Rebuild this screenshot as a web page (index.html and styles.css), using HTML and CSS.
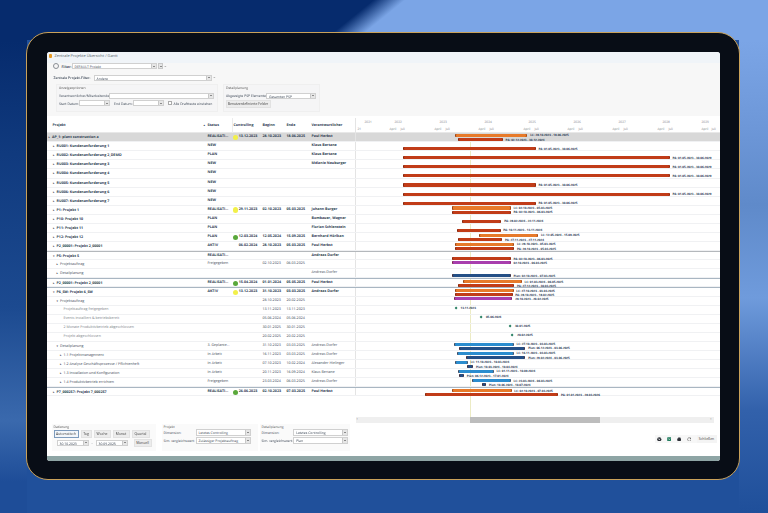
FILE: index.html
```html
<!DOCTYPE html>
<html lang="de">
<head>
<meta charset="utf-8">
<title>Zentrale Projekte Übersicht / Gantt</title>
<link rel="stylesheet" href="styles.css">
</head>
<body>
<div class="frame">
<div class="window">
  <div class="titlebar"><span class="appicon"></span><span>Zentrale Projekte Übersicht / Gantt</span></div>
  <div class="top">
    <div class="line line-filter">
      <span class="circle"></span><strong class="lbl-filter">Filter:</strong>
      <div class="field f-filter"><span class="val">DEFAULT Projekt</span><span class="drop"></span></div><span class="drop loose"></span><span class="dots">•••</span>
    </div>
    <div class="line line-central">
      <span class="lbl-central">Zentrale Projekt-Filter:</span>
      <div class="field f-central"><span class="val">Andere</span><span class="drop"></span></div><span class="dots">•••</span>
    </div>
    <div class="groups">
      <section class="group g-view">
        <h4>Anzeigeoptionen</h4>
        <div class="line"><span class="lbl-owner">Verantwortlicher/Mitarbeitender:</span><div class="field f-owner"><span class="val"></span><span class="drop"></span></div></div>
        <div class="line line-dates">
          <span class="lbl-date">Start Datum:</span><div class="field f-date"><span class="val"></span><span class="drop"></span></div>
          <span class="lbl-date2">End Datum:</span><div class="field f-date"><span class="val"></span><span class="drop"></span></div>
          <span class="check"></span><span>Alle Drafttexte einziehen</span>
        </div>
      </section>
      <section class="group g-plan">
        <h4>Detailplanung</h4>
        <div class="line"><span class="lbl-psp">Abgezeigte PSP Elemente:</span><div class="field f-psp"><span class="val">Gesamten PSP</span><span class="drop"></span></div></div>
        <button class="btn btn-fields">Benutzerdefinierte Felder</button>
      </section>
    </div>
  </div>

  <div class="table">
    <div class="row head">
      <div class="c hname"><span>Projekt</span><span class="sort">▴</span></div>
      <div class="c">Status</div>
      <div class="c hctl">Controlling</div>
      <div class="c">Beginn</div>
      <div class="c">Ende</div>
      <div class="c">Verantwortlicher</div>
      <div class="timeline">
        <span class="yr" style="left:9px">2021</span><span class="yr" style="left:39px">2022</span><span class="yr" style="left:84px">2023</span><span class="yr" style="left:129px">2024</span><span class="yr" style="left:173px">2025</span><span class="yr" style="left:218px">2026</span><span class="yr" style="left:263px">2027</span><span class="yr" style="left:307px">2028</span><span class="yr" style="left:346px">2029</span>
        <span class="mo" style="left:2px">21</span>
        <span class="mo" style="left:34px">April</span><span class="mo" style="left:45px">Juli</span><span class="mo" style="left:79px">April</span><span class="mo" style="left:90px">Juli</span><span class="mo" style="left:123px">April</span><span class="mo" style="left:134px">Juli</span><span class="mo" style="left:168px">April</span><span class="mo" style="left:179px">Juli</span><span class="mo" style="left:212px">April</span><span class="mo" style="left:223px">Juli</span><span class="mo" style="left:257px">April</span><span class="mo" style="left:268px">Juli</span><span class="mo" style="left:302px">April</span><span class="mo" style="left:313px">Juli</span><span class="mo" style="left:346px">April</span><span class="mo" style="left:356px">Juli</span>
      </div>
    </div>
    <div class="rows">
      <span class="today"></span>

      <div class="row bold hl"><div class="c l0"><i>▸</i>AP_1: plant construction a</div><div class="c">REALISATI...</div><div class="c ctl"><span class="dot y"></span>13.12.2023</div><div class="c">28.10.2023</div><div class="c">18.06.2025</div><div class="c">Paul Herbst</div>
        <div class="gantt"><span class="bar org up" style="left:99.3px;width:72.7px"><b>LC: 28.10.2023 - 18.06.2025</b></span><span class="bar red lo" style="left:102.7px;width:44.7px"><b>PA: 02.12.2023 - 30.12.2024</b></span></div></div>

      <div class="row bold"><div class="c l1"><i>▸</i>RU001: Kundenanforderung 1</div><div class="c">NEW</div><div class="c"></div><div class="c"></div><div class="c"></div><div class="c">Klaus Bertane</div>
        <div class="gantt"><span class="bar red lo" style="left:47px;width:133.3px"><b>PA: 01.05.2023 - 30.06.2025</b></span></div></div>
      <div class="row bold"><div class="c l1"><i>▸</i>RU002: Kundenanforderung 2_DEMO</div><div class="c">PLAN</div><div class="c"></div><div class="c"></div><div class="c"></div><div class="c">Klaus Bertane</div>
        <div class="gantt"><span class="bar red lo" style="left:47px;width:267.3px"><b>PA: 01.05.2023 - 30.06.2029</b></span></div></div>
      <div class="row bold"><div class="c l1"><i>▸</i>RU003: Kundenanforderung 3</div><div class="c">NEW</div><div class="c"></div><div class="c"></div><div class="c"></div><div class="c">Mélanie Neuburger</div>
        <div class="gantt"><span class="bar red lo" style="left:47px;width:267.3px"><b>PA: 01.05.2023 - 30.06.2029</b></span></div></div>
      <div class="row bold"><div class="c l1"><i>▸</i>RU004: Kundenanforderung 4</div><div class="c">NEW</div><div class="c"></div><div class="c"></div><div class="c"></div><div class="c"></div>
        <div class="gantt"><span class="bar red lo" style="left:47px;width:267.3px"><b>PA: 01.05.2023 - 30.06.2029</b></span></div></div>
      <div class="row bold"><div class="c l1"><i>▸</i>RU005: Kundenanforderung 5</div><div class="c">NEW</div><div class="c"></div><div class="c"></div><div class="c"></div><div class="c"></div>
        <div class="gantt"><span class="bar red lo" style="left:47px;width:133.3px"><b>PA: 01.05.2023 - 30.06.2025</b></span></div></div>
      <div class="row bold"><div class="c l1"><i>▸</i>RU006: Kundenanforderung 6</div><div class="c">NEW</div><div class="c"></div><div class="c"></div><div class="c"></div><div class="c"></div>
        <div class="gantt"><span class="bar red lo" style="left:47px;width:267.3px"><b>PA: 01.05.2023 - 30.06.2029</b></span></div></div>
      <div class="row bold"><div class="c l1"><i>▸</i>RU007: Kundenanforderung 7</div><div class="c">NEW</div><div class="c"></div><div class="c"></div><div class="c"></div><div class="c"></div>
        <div class="gantt"><span class="bar red lo" style="left:47px;width:133.3px"><b>PA: 01.05.2023 - 30.06.2025</b></span></div></div>

      <div class="row bold"><div class="c l1"><i>▸</i>P1: Projekt 1</div><div class="c">REALISATI...</div><div class="c ctl"><span class="dot y"></span>29.11.2023</div><div class="c">02.10.2023</div><div class="c">05.03.2025</div><div class="c">Johann Burger</div>
        <div class="gantt"><span class="bar org up" style="left:96px;width:59.3px"><b>LC: 02.10.2023 - 05.03.2025</b></span><span class="bar red lo" style="left:96px;width:59.3px"><b>PA: 02.10.2023 - 06.03.2025</b></span></div></div>
      <div class="row bold"><div class="c l1"><i>▸</i>P10: Projekt 10</div><div class="c">PLAN</div><div class="c"></div><div class="c"></div><div class="c"></div><div class="c">Bombauer, Wagner</div>
        <div class="gantt"><span class="bar red lo" style="left:106.7px;width:39.3px"><b>PA: 28.02.2024 - 22.11.2024</b></span></div></div>
      <div class="row bold"><div class="c l1"><i>▸</i>P11: Projekt 11</div><div class="c">PLAN</div><div class="c"></div><div class="c"></div><div class="c"></div><div class="c">Florian Schlenstein</div>
        <div class="gantt"><span class="bar red lo" style="left:101px;width:44px"><b>PA: 10.11.2023 - 13.11.2024</b></span></div></div>
      <div class="row bold"><div class="c l1"><i>▸</i>P12: Projekt 12</div><div class="c">PLAN</div><div class="c ctl"><span class="dot g"></span>12.03.2024</div><div class="c">12.05.2024</div><div class="c">15.09.2025</div><div class="c">Bernhard Hörlkan</div>
        <div class="gantt"><span class="bar org up" style="left:123px;width:59.7px"><b>LC: 12.05.2024 - 15.09.2025</b></span><span class="bar red lo" style="left:102px;width:44.7px"><b>PA: 27.11.2023 - 27.11.2024</b></span></div></div>
      <div class="row bold"><div class="c l1"><i>▸</i>P2_00001: Projekt 2_00001</div><div class="c">AKTIV</div><div class="c ctl">06.02.2024</div><div class="c">28.10.2023</div><div class="c">05.03.2025</div><div class="c">Paul Herbst</div>
        <div class="gantt"><span class="bar org up" style="left:99px;width:59.7px"><b>LC: 28.10.2023 - 05.03.2025</b></span><span class="bar red lo" style="left:99px;width:59.7px"><b>PA: 28.10.2023 - 05.03.2025</b></span></div></div>

      <div class="row sep thick"><div class="c l1 b"><i>▾</i>P5: Projekt 5</div><div class="c b">REALISATI...</div><div class="c"></div><div class="c"></div><div class="c"></div><div class="c b">Andreas Dorfer</div>
        <div class="gantt"><span class="bar red lo" style="left:96px;width:59.3px"><b>PA: 02.10.2023 - 06.03.2025</b></span></div></div>
      <div class="row"><div class="c l2"><i>▸</i>Projektauftrag</div><div class="c">Freigegeben</div><div class="c"></div><div class="c">02.10.2023</div><div class="c">06.03.2025</div><div class="c"></div>
        <div class="gantt"><span class="bar pur up" style="left:96px;width:59.3px"><b>02.10.2023 - 06.03.2025</b></span></div></div>
      <div class="row"><div class="c l2"><i>▸</i>Detailplanung</div><div class="c"></div><div class="c"></div><div class="c"></div><div class="c"></div><div class="c">Andreas Dorfer</div>
        <div class="gantt"><span class="bar nav lo" style="left:96px;width:59.3px"><b>Plan: 02.10.2023 - 07.03.2025</b></span></div></div>

      <div class="row bold sep"><div class="c l1"><i>▸</i>P2_00001: Projekt 2_00001</div><div class="c">REALISATI...</div><div class="c ctl"><span class="dot g"></span>15.04.2024</div><div class="c">01.01.2024</div><div class="c">05.05.2025</div><div class="c">Paul Herbst</div>
        <div class="gantt"><span class="bar org up" style="left:107px;width:59.3px"><b>LC: 01.03.2024 - 06.05.2025</b></span><span class="bar red lo" style="left:102.7px;width:56px"><b>PA: 27.12.2023 - 30.03.2025</b></span></div></div>

      <div class="row bold sep"><div class="c l1"><i>▾</i>P6_SW: Projekt 6_SW</div><div class="c">AKTIV</div><div class="c ctl"><span class="dot y"></span>13.12.2023</div><div class="c">31.10.2023</div><div class="c">03.03.2025</div><div class="c">Andreas Dorfer</div>
        <div class="gantt"><span class="bar org up" style="left:99px;width:59px"><b>LC: 27.10.2023 - 03.03.2025</b></span><span class="bar red lo" style="left:99px;width:58px"><b>PA: 28.10.2023 - 18.02.2025</b></span></div></div>
      <div class="row"><div class="c l2"><i>▾</i>Projektauftrag</div><div class="c"></div><div class="c"></div><div class="c">28.10.2023</div><div class="c">20.02.2025</div><div class="c"></div>
        <div class="gantt"><span class="bar pur up" style="left:98.7px;width:58.3px"><b>28.10.2023 - 20.02.2025</b></span></div></div>
      <div class="row"><div class="c l3">Projektauftrag freigegeben</div><div class="c"></div><div class="c"></div><div class="c">13.11.2023</div><div class="c">13.11.2023</div><div class="c"></div>
        <div class="gantt"><span class="ms" style="left:100.3px"><b>13.11.2023</b></span></div></div>
      <div class="row"><div class="c l3">Events installiert &amp; betriebsbereit</div><div class="c"></div><div class="c"></div><div class="c">05.06.2024</div><div class="c">05.06.2024</div><div class="c"></div>
        <div class="gantt"><span class="ms" style="left:125.7px"><b>05.06.2024</b></span></div></div>
      <div class="row"><div class="c l3">2 Monate Produktivbetrieb abgeschlossen</div><div class="c"></div><div class="c"></div><div class="c">30.01.2025</div><div class="c">30.01.2025</div><div class="c"></div>
        <div class="gantt"><span class="ms" style="left:154.7px"><b>30.01.2025</b></span></div></div>
      <div class="row"><div class="c l3">Projekt abgeschlossen</div><div class="c"></div><div class="c"></div><div class="c">20.02.2025</div><div class="c">20.02.2025</div><div class="c"></div>
        <div class="gantt"><span class="ms" style="left:157px"><b>20.02.2025</b></span></div></div>
      <div class="row"><div class="c l2"><i>▾</i>Detailplanung</div><div class="c">3. Geplante...</div><div class="c"></div><div class="c">31.10.2023</div><div class="c">03.03.2025</div><div class="c">Andreas Dorfer</div>
        <div class="gantt"><span class="bar sky up" style="left:98.7px;width:59.7px"><b>LC: 27.10.2023 - 03.03.2025</b></span><span class="bar nav lo" style="left:103.3px;width:66.7px"><b>Plan: 06.12.2023 - 03.06.2025</b></span></div></div>
      <div class="row"><div class="c l3a"><i>▸</i>1.1 Projektmanagement</div><div class="c">In Arbeit</div><div class="c"></div><div class="c">16.11.2023</div><div class="c">03.03.2025</div><div class="c">Andreas Dorfer</div>
        <div class="gantt"><span class="bar sky up" style="left:101.7px;width:56.7px"><b>LC: 16.11.2023 - 03.03.2025</b></span><span class="bar nav lo" style="left:110.3px;width:59.7px"><b>Plan: 29.02.2024 - 03.06.2025</b></span></div></div>
      <div class="row"><div class="c l3a"><i>▸</i>1.2 Analyse Geschäftsprozesse / Pflichtenheft</div><div class="c">In Arbeit</div><div class="c"></div><div class="c">07.10.2023</div><div class="c">10.02.2024</div><div class="c">Alexander Hielinger</div>
        <div class="gantt"><span class="bar sky up" style="left:99px;width:13.3px"><b>LC: 11.10.2023 - 10.03.2024</b></span><span class="bar nav lo" style="left:111.7px;width:6px"><b>Plan: 10.03.2024 - 10.04.2024</b></span></div></div>
      <div class="row"><div class="c l3a"><i>▸</i>1.3 Installation und Konfiguration</div><div class="c">In Arbeit</div><div class="c"></div><div class="c">20.11.2023</div><div class="c">16.09.2024</div><div class="c">Klaus Bertane</div>
        <div class="gantt"><span class="bar sky up" style="left:102px;width:36.3px"><b>LC: 01.11.2023 - 10.09.2024</b></span><span class="bar nav lo" style="left:103.3px;width:5.3px"><b>Plan: 06.12.2023 - 17.01.2024</b></span></div></div>
      <div class="row"><div class="c l3a"><i>▸</i>1.4 Produktivbetrieb errichten</div><div class="c">Freigegeben</div><div class="c"></div><div class="c">23.03.2024</div><div class="c">06.03.2025</div><div class="c">Andreas Dorfer</div>
        <div class="gantt"><span class="bar sky up" style="left:116.7px;width:38.7px"><b>LC: 23.03.2024 - 06.03.2025</b></span><span class="bar nav lo" style="left:126px;width:4.7px"><b>Plan: 10.06.2024 - 10.07.2024</b></span></div></div>

      <div class="row bold sep"><div class="c l1"><i>▸</i>P7_000257: Projekt 7_000257</div><div class="c">REALISATI...</div><div class="c ctl"><span class="dot g"></span>26.06.2023</div><div class="c">02.10.2023</div><div class="c">07.03.2025</div><div class="c">Paul Herbst</div>
        <div class="gantt"><span class="bar org up" style="left:96px;width:60px"><b>LC: 02.10.2023 - 07.03.2025</b></span><span class="bar red lo" style="left:69px;width:133.7px"><b>PA: 01.01.2023 - 28.03.2026</b></span></div></div>
    </div>
    <div class="scroll"><span class="arrow">‹</span><span class="thumb"></span><span class="arrow end">›</span></div>
  </div>

  <div class="bottom">
    <section class="pane p-date">
      <h4>Datierung</h4>
      <div class="btns"><button class="btn sel b-auto">Automatisch</button><button class="btn b-day">Tag</button><button class="btn b-wk">Woche</button><button class="btn b-wk">Monat</button><button class="btn b-q">Quartal</button></div>
      <div class="dates"><div class="field f-d"><span class="val">30.10.2023</span><span class="drop"></span></div><span class="dash">-</span><div class="field f-d"><span class="val">30.09.2025</span><span class="drop"></span></div><button class="btn b-q">Manuell</button></div>
    </section>
    <section class="pane p-proj">
      <h4>Projekt</h4>
      <div class="line"><span class="lbl-dim">Dimension:</span><div class="field f-sel"><span class="val">Letztes Controlling</span><span class="drop"></span></div></div>
      <div class="line"><span class="lbl-dim">Sim. vergleichswert:</span><div class="field f-sel"><span class="val">Zulässiger Projektauftrag</span><span class="drop"></span></div></div>
    </section>
    <section class="pane p-det">
      <h4>Detailplanung</h4>
      <div class="line"><span class="lbl-dim">Dimension:</span><div class="field f-sel"><span class="val">Letztes Controlling</span><span class="drop"></span></div></div>
      <div class="line"><span class="lbl-dim">Sim. vergleichswert:</span><div class="field f-sel"><span class="val">Plan</span><span class="drop"></span></div></div>
    </section>
    <div class="actions">
      <svg class="ico" viewBox="0 0 10 10"><circle cx="5" cy="5" r="4.5" fill="#2b2f36"/><path d="M3.3 3.3l3.4 3.4M6.7 3.3L3.3 6.7" stroke="#fff" stroke-width="1.2"/></svg>
      <svg class="ico" viewBox="0 0 10 10"><rect x=".5" y=".5" width="9" height="9" rx="1" fill="#1f7a5c"/><path d="M3 3l4 4M7 3L3 7" stroke="#cfe8dd" stroke-width="1.2"/></svg>
      <svg class="ico" viewBox="0 0 10 10"><path d="M2.5 1h5v2.5h2V8H7.5v1.5h-5V8H.5V3.5h2z" fill="#2b2f36"/></svg>
      <svg class="ico" viewBox="0 0 10 10"><path d="M8.2 3.2A3.8 3.8 0 1 0 8.8 5" fill="none" stroke="#444" stroke-width="1.1"/><path d="M8.8 .8v3H5.8z" fill="#444"/></svg>
      <button class="btn b-close">Schließen</button>
    </div>
  </div>
  <div class="strip"></div>
</div>
</div>
</body>
</html>
```
FILE: styles.css
```css
* { box-sizing: border-box; }
html, body { margin: 0; height: 100%; }
body {
  width: 768px;
  height: 513px;
  overflow: hidden;
  padding: 32px 28px 33px 26px;
  font-family: "Open Sans", "Liberation Sans", sans-serif;
  font-size: 3.6px;
  color: #3a4554;
  text-rendering: geometricPrecision;
  background-color: #20509b;
  background-repeat: no-repeat;
  background-image:
    linear-gradient(141deg, #062b6d 235px, #7ba5e6 255px),
    linear-gradient(180deg, #062b6d 0%, #062b6d 8%, #103a7e 30%, #1c4a90 60%, #3a69ad 82%, #1e4d98 94%),
    linear-gradient(180deg, #7ba5e6 0%, #7ba5e6 8%, #6d97d8 25%, #5f8aca 40%, #6f9bdc 58%, #3261ab 80%, #1f4f9a 100%);
  background-size: 768px 40px, 27px 513px, 29px 513px;
  background-position: 0 0, 0 0, 739px 0;
}
.frame {
  width: 714px;
  height: 448px;
  padding: 19px 19px 18px 19.5px;
  background: #080d16;
  border: 1.5px solid #c9a15a;
  border-radius: 22px;
}
.window {
  width: 673px;
  height: 409px;
  background: #fff;
  border-radius: 3px;
  overflow: hidden;
  display: flex;
  flex-direction: column;
  filter: blur(.45px);
}
.titlebar {
  height: 11px;
  flex: none;
  background: #f0f4f8;
  display: flex;
  align-items: center;
  gap: 2.5px;
  padding: 0 0 3px 2px;
  font-size: 3.9px;
  color: #555e68;
}
.appicon { width: 3.5px; height: 3.5px; border-radius: 1px; background: #e89a22; }

.top {
  flex: none;
  height: 53px;
  background: #f7f7f7;
  font-size: 3.4px;
  padding: 0 0 0 7px;
  display: flex;
  flex-direction: column;
}
.line { display: flex; align-items: center; height: 6px; white-space: nowrap; }
.line-central { margin-top: 5.5px; }
.circle { width: 6px; height: 6px; border: .6px solid #8a8f96; border-radius: 50%; margin-left: -.5px; }
.lbl-filter { margin-left: 2.5px; width: 10px; }
.lbl-central { width: 40px; font-weight: 600; }
.field { display: flex; height: 100%; background: #fff; border: .5px solid #d0d0d0; }
.val { flex: 1; padding-left: 2px; line-height: 5px; white-space: nowrap; overflow: hidden; }
.drop { width: 5px; flex: none; background: #e6e6e6; border-left: .5px solid #c8c8c8; position: relative; }
.drop.loose { height: 100%; margin-left: 1px; border: .5px solid #c8c8c8; }
.drop::after { content: ""; position: absolute; left: 1.2px; top: 1.8px; width: 2px; height: 1px; background: #8a8a8a; }
.dots { font-size: 2.2px; letter-spacing: -.3px; color: #444; margin-left: 2px; }
.f-filter { width: 85px; }
.f-central { width: 118px; }
.groups { display: flex; gap: 5px; margin-top: 3.5px; margin-left: 2px; }
.group { background: #f5f5f6; border: .5px solid #efefef; height: 28px; padding: 0 2.5px; }
.group h4, .pane h4 { margin: 0; font-weight: 400; font-size: 3.4px; line-height: 5px; color: #555; }
.g-view { width: 162px; }
.g-plan { width: 97px; }
.group h4 + .line { margin-top: 2.5px; }
.line-dates { margin-top: 1.5px; }
.lbl-owner { width: 50px; }
.f-owner { width: 105px; }
.lbl-date { width: 20px; }
.lbl-date2 { width: 19px; margin-left: 4px; }
.f-date { width: 31px; }
.check { width: 3.5px; height: 3.5px; border: .4px solid #aaa; background: #fff; margin: 0 2px 0 4px; }
.lbl-psp { width: 40px; }
.f-psp { width: 50px; }
.btn {
  font: inherit;
  color: #444;
  background: #ececec;
  border: .5px solid #e2e2e2;
  padding: 0;
  text-align: center;
  line-height: 1;
}
.btn-fields { display: block; width: 45px; height: 8px; margin: 1.5px 0 0 -.5px; }

.table { flex: none; height: 307px; position: relative; background: #fff; font-size: 3.6px; }
.row {
  display: grid;
  grid-template-columns: 160px 25px 30px 24px 25px 44px 361px;
  height: 9.08px;
  border-bottom: .5px solid #f0f1f3;
  line-height: 8.5px;
  position: relative;
}
.c { white-space: nowrap; overflow: hidden; padding-left: 1px; position: relative; z-index: 1; }
.bold .c, .c.b { font-weight: 700; color: #2c3a4f; }
.l0 { padding-left: 2px; }
.l1 { padding-left: 6.5px; }
.l2 { padding-left: 10px; }
.l3 { padding-left: 17px; color: #7a8088; }
.l3a { padding-left: 13.5px; }
.c i { display: inline-block; width: 3.6px; font-style: normal; font-size: 3px; color: #445; font-family: "DejaVu Sans", sans-serif; }
.hl { background: #d8d8d8; }
.sep { border-top: .8px solid #a9b6c2; }
.thick { border-top: 1.4px solid #b4b8bc; }

.head { height: 15.15px; margin-top: 2px; font-weight: 700; color: #2c3a4f; line-height: 15px; grid-template-rows: 15.15px; border-bottom: .5px solid #e8e8e8; }
.hname { display: flex; justify-content: space-between; padding: 0 1.5px 0 6px; }
.sort { font-size: 3px; font-family: "DejaVu Sans", sans-serif; }
.hctl { border-left: .5px solid #ececec; padding-left: 1px; }
.timeline { position: relative; border-left: .5px solid #e4e4e4; font-weight: 400; color: #7f858c; font-size: 3.2px; line-height: 4px; }
.yr { position: absolute; top: 1.7px; }
.mo { position: absolute; top: 8.7px; }

.rows { position: relative; }
.today { position: absolute; left: 423px; top: 0; height: 285px; width: .8px; background: #ecebc4; z-index: 0; }
.gantt { position: relative; border-left: .5px solid #e4e4e4; }
.bar { position: absolute; height: 3.1px; border-radius: 1px; z-index: 2; box-shadow: inset 1px 0 0 rgba(90,20,0,.55), inset -1px 0 0 rgba(90,20,0,.45); }
.bar.up { top: .7px; }
.bar.lo { top: 4.9px; }
.bar b, .ms b {
  position: absolute;
  left: 100%;
  top: -.4px;
  margin-left: 2.7px;
  white-space: nowrap;
  font-size: 3px;
  line-height: 4px;
  font-weight: 700;
  color: #2c3a55;
}
.org { background: #e77a2a; }
.red { background: #c13c18; }
.pur { background: #a83eae; }
.nav { background: #244f86; }
.sky { background: #2b8dcf; }
.ms { position: absolute; top: .7px; width: 2.2px; height: 3.1px; margin-left: -1.1px; }
.ms::before { content: ""; position: absolute; left: 0; top: .45px; width: 2.2px; height: 2.2px; background: #1f7a5c; transform: rotate(45deg); }
.ms b { margin-left: 3.6px; }
.ctl { padding-left: 7.3px; }
.dot { position: absolute; left: 1px; top: 1.5px; width: 5.5px; height: 5.5px; border-radius: 50%; }
.dot.y { background: #f2f04a; }
.dot.g { background: #5aa83a; }
.scroll {
  position: absolute;
  left: 309px;
  top: 301px;
  width: 358px;
  height: 5.5px;
  background: #efefef;
  display: flex;
  align-items: center;
  font-size: 4px;
  color: #777;
}
.thumb { position: absolute; left: 114px; width: 130px; height: 100%; background: #bdbdbd; }
.arrow { padding-left: 1px; }
.arrow.end { margin-left: auto; padding-right: 2px; }

.bottom { flex: none; height: 33px; display: flex; background: #fff; font-size: 3.4px; padding: 1px 3px 0 5px; align-items: flex-start; }
.pane { background: #fafafa; height: 27px; padding: 0 2px; }
.p-date { width: 104px; }
.p-proj { width: 96px; margin-left: 6px; padding-left: 2px; }
.p-det { width: 90px; margin-left: 2px; padding-left: 2px; }
.btns { display: flex; gap: 2px; height: 7.5px; margin-top: 1px; }
.btns .btn, .dates .btn { height: 100%; }
.b-auto { width: 25px; border: .6px solid #7d9bbd; background: #f2f6fa; }
.b-day { width: 11px; }
.b-wk { width: 17px; }
.b-q { width: 18px; }
.dates { display: flex; align-items: center; height: 8px; margin-top: 1px; padding-left: 3px; }
.f-d { width: 32px; height: 6px; }
.dash { width: 7px; text-align: center; }
.dates .btn { margin-left: 6px; }
.pane .line { height: 6.5px; margin-top: 1.5px; }
.pane h4 + .line { margin-top: 0; }
.lbl-dim { width: 32px; }
.f-sel { width: 55px; }
.actions { margin-left: auto; display: flex; align-items: center; gap: 5.3px; height: 8px; margin-top: 11px; background: #f7f7f7; padding-left: 2px; }
.ico { width: 4.6px; height: 4.6px; flex: none; }
.b-close { width: 20px; height: 8px; background: #f4f4f4; border: 0; }
.strip { flex: 1; background: #8ea5a5; }
```
